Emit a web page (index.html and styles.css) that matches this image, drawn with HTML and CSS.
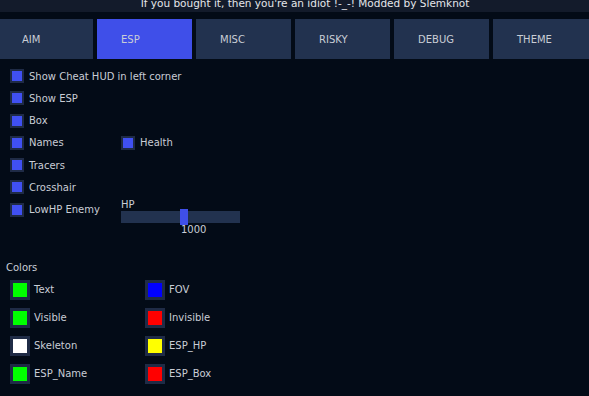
FILE: index.html
```html
<!DOCTYPE html>
<html lang="en">
<head>
    <meta charset="UTF-8">
    <meta name="viewport" content="width=device-width, initial-scale=1.0">
    <title>Menu</title>
    <link rel="stylesheet" href="styles.css">
</head>
<body>

<div class="window">
    <div class="titlebar"><span>If you bought it, then you're an idiot !-_-! Modded by Slemknot</span></div>

    <div class="tabs">
        <button class="tab">AIM</button>
        <button class="tab active">ESP</button>
        <button class="tab">MISC</button>
        <button class="tab">RISKY</button>
        <button class="tab">DEBUG</button>
        <button class="tab">THEME</button>
    </div>

    <div class="options">
        <label class="check"><span class="box"></span>Show Cheat HUD in left corner</label>
        <label class="check"><span class="box"></span>Show ESP</label>
        <label class="check"><span class="box"></span>Box</label>
        <div class="pair">
            <label class="check"><span class="box"></span>Names</label>
            <label class="check"><span class="box"></span>Health</label>
        </div>
        <label class="check"><span class="box"></span>Tracers</label>
        <label class="check"><span class="box"></span>Crosshair</label>
        <div class="pair">
            <label class="check"><span class="box"></span>LowHP Enemy</label>
            <div class="slider">
                <div class="slider-label">HP</div>
                <div class="track"><span class="thumb"></span></div>
                <div class="slider-value">1000</div>
            </div>
        </div>
    </div>

    <div class="colors">
        <div class="colors-title">Colors</div>
        <div class="swatches">
            <div class="swatch"><span class="chip"><i style="background:#00ff00"></i></span>Text</div>
            <div class="swatch"><span class="chip"><i style="background:#0000ff"></i></span>FOV</div>
            <div class="swatch"><span class="chip"><i style="background:#00ff00"></i></span>Visible</div>
            <div class="swatch"><span class="chip"><i style="background:#ff0000"></i></span>Invisible</div>
            <div class="swatch"><span class="chip"><i style="background:#ffffff"></i></span>Skeleton</div>
            <div class="swatch"><span class="chip"><i style="background:#ffff00"></i></span>ESP_HP</div>
            <div class="swatch"><span class="chip"><i style="background:#00ff00"></i></span>ESP_Name</div>
            <div class="swatch"><span class="chip"><i style="background:#ff0000"></i></span>ESP_Box</div>
        </div>
    </div>
</div>

</body>
</html>
```

FILE: styles.css
```css
body {
    margin: 0;
    background-color: #030b17;
    font-family: "DejaVu Sans", Verdana, sans-serif;
    font-size: 10px;
    color: #c9cdd6;
    overflow: hidden;
}
.window {
    width: 589px;
    height: 396px;
}
.titlebar {
    height: 12px;
    background-color: #131b2b;
    overflow: hidden;
    text-align: center;
    padding-left: 21px;
    color: #e4e6ea;
    font-size: 10.5px;
}
.titlebar span {
    display: block;
    line-height: 12px;
    margin-top: -3px;
}
.tabs {
    display: flex;
    gap: 4px;
    margin: 7px -2px 0 -2px;
}
.tab {
    flex: 0 0 95px;
    height: 40px;
    padding: 0 0 0 24px;
    border: none;
    background-color: #22324f;
    color: #c9cdd6;
    font-family: inherit;
    font-size: 10px;
    text-align: left;
}
.tab:last-child {
    flex: 1;
}
.tab.active {
    background-color: #3f4fe9;
}
.options {
    display: flex;
    flex-direction: column;
    gap: 8.3px;
    padding: 10px 0 0 10px;
}
.check {
    display: flex;
    align-items: center;
    height: 14px;
}
.box {
    width: 10px;
    height: 10px;
    border: 2px solid #1f2b46;
    background-color: #4050f2;
    margin-right: 5px;
}
.pair {
    display: flex;
    align-items: flex-start;
}
.pair > .check:first-child {
    width: 111px;
}
.slider {
    position: relative;
    margin-top: -3px;
}
.slider-label {
    line-height: 10px;
    height: 10px;
}
.track {
    position: relative;
    width: 119px;
    height: 12px;
    margin-top: 1px;
    background-color: #22324f;
}
.thumb {
    position: absolute;
    left: 59px;
    top: -2px;
    width: 8px;
    height: 16px;
    background-color: #3f4fe9;
}
.slider-value {
    padding-left: 60px;
    margin-top: 1px;
    line-height: 12px;
}
.colors {
    padding: 26px 0 0 6px;
}
.colors-title {
    line-height: 12px;
}
.swatches {
    display: grid;
    grid-template-columns: 135px 135px;
    row-gap: 8px;
    padding: 6px 0 0 4px;
}
.swatch {
    display: flex;
    align-items: center;
    height: 20px;
}
.chip {
    width: 14px;
    height: 14px;
    padding: 3px;
    background-color: #1f2b46;
    margin-right: 4px;
}
.chip i {
    display: block;
    width: 14px;
    height: 14px;
}
```
